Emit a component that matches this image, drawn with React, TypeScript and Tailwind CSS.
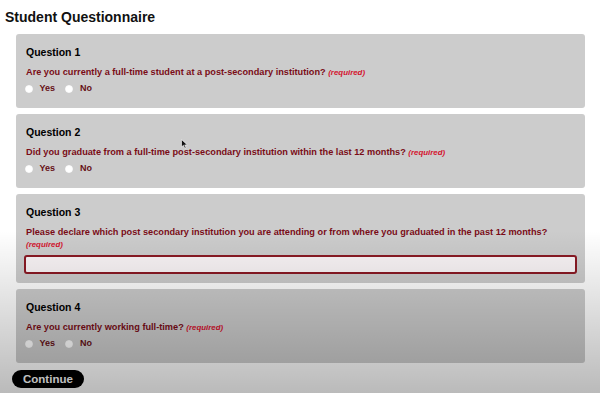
import { useState } from 'react';

type Question = {
  id: number;
  text: string;
  kind: 'yesno' | 'text';
};

const QUESTIONS: Question[] = [
  { id: 1, text: 'Are you currently a full-time student at a post-secondary institution?', kind: 'yesno' },
  { id: 2, text: 'Did you graduate from a full-time post-secondary institution within the last 12 months?', kind: 'yesno' },
  {
    id: 3,
    text: 'Please declare which post secondary institution you are attending or from where you graduated in the past 12 months?',
    kind: 'text',
  },
  { id: 4, text: 'Are you currently working full-time?', kind: 'yesno' },
];

function Required() {
  return <span className="text-[7.9px] font-bold italic text-[#d4122d]">(required)</span>;
}

function YesNo({ name }: { name: string }) {
  const [value, setValue] = useState<string | null>(null);
  return (
    <div className="-ml-[1.5px] mt-[5px] flex h-[10px] items-center text-[9px] font-bold text-[#661016]">
      {['Yes', 'No'].map((opt) => (
        <label key={opt} className="mr-[10px] flex cursor-pointer items-center">
          <input
            type="radio"
            name={name}
            className="sr-only"
            checked={value === opt}
            onChange={() => setValue(opt)}
          />
          <span className="h-[8px] w-[8px] rounded-full bg-white shadow-[inset_0_0_1px_rgba(0,0,0,0.25)]" />
          <span className="ml-[7px]">{opt}</span>
        </label>
      ))}
    </div>
  );
}

function QuestionCard({ q }: { q: Question }) {
  return (
    <div className="rounded-[3px] bg-[#cccccc] pl-[10px] pr-[8px] pt-[12px]">
      <div className="text-[10.5px] font-bold leading-[12px] text-black">Question {q.id}</div>
      <p className="mt-[8px] text-[9.2px] font-bold leading-[12px] text-[#7a0c17]">
        {q.text}
        {q.kind === 'text' ? <br /> : ' '}
        <Required />
      </p>
      {q.kind === 'yesno' ? (
        <div className="pb-[14px]">
          <YesNo name={`q${q.id}`} />
        </div>
      ) : (
        <div className="-ml-[2px] pb-[9px] pt-[4px]">
          <input
            type="text"
            className="block h-[19px] w-full rounded-[3px] border-2 border-[#8a1a24] bg-[#f9f4f6] px-1 text-[9px] outline-none"
          />
        </div>
      )}
    </div>
  );
}

export default function App() {
  return (
    <div
      className="relative h-[393px] w-[600px] overflow-hidden bg-white"
      style={{ fontFamily: '"Liberation Sans", Arial, sans-serif' }}
    >
      <h1 className="pl-[5px] pt-[9px] text-[14px] font-bold leading-[17px] text-[#111]">Student Questionnaire</h1>

      <div className="ml-[16px] mt-[8px] flex w-[569px] flex-col gap-[6px]">
        {QUESTIONS.map((q) => (
          <QuestionCard key={q.id} q={q} />
        ))}
      </div>

      <button className="ml-[12px] mt-[7px] h-[18px] rounded-full bg-black px-[11px] text-[11.5px] font-bold leading-[18px] text-white">
        Continue
      </button>

      {/* darkening towards the bottom of the screen */}
      <div className="pointer-events-none absolute inset-x-0 bottom-0 top-[231px] bg-linear-to-b from-transparent to-black/[0.27]" />

      {/* mouse pointer */}
      <svg className="pointer-events-none absolute left-[181px] top-[139px]" width="7" height="10" viewBox="0 0 7 10">
        <path d="M0.5 0.5 L0.5 8 L2.4 6.3 L3.8 9.3 L5 8.8 L3.7 5.9 L6.3 5.9 Z" fill="#111" stroke="#fff" strokeWidth="0.6" />
      </svg>
    </div>
  );
}
